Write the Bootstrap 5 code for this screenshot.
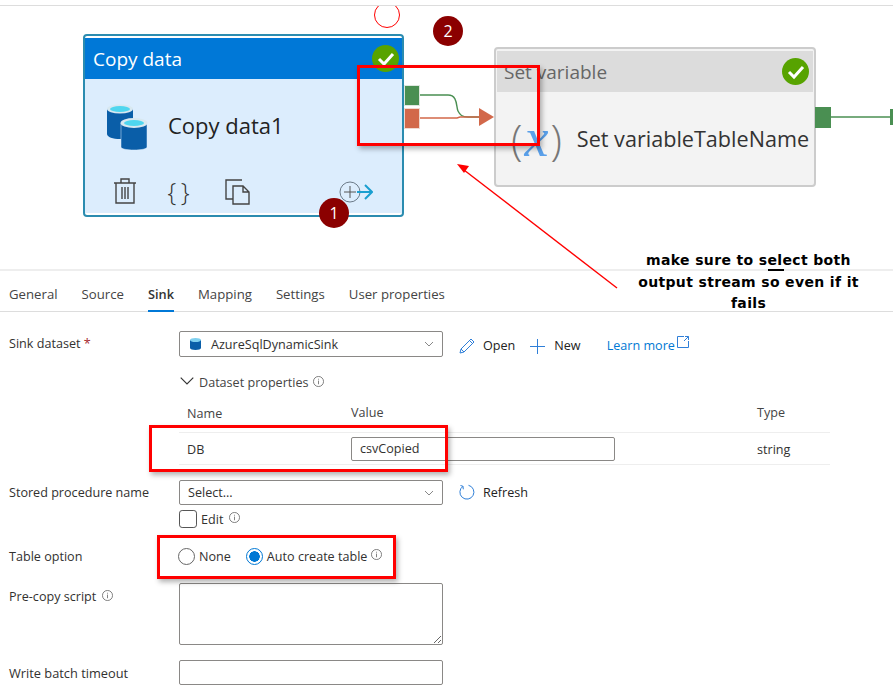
<!DOCTYPE html>
<html lang="en">
<head>
<meta charset="utf-8">
<title>Copy data sink</title>
<link href="https://cdn.jsdelivr.net/npm/bootstrap@5.3.0/dist/css/bootstrap.min.css" rel="stylesheet">
<style>
html,body{height:698px;overflow:hidden;background:#fff}
body{position:relative;font-family:"Open Sans","Noto Sans",sans-serif;font-size:12.6px;color:#323130}
.canvas-area{position:relative;height:271px;border-bottom:2px solid #eee}
.canvas-top{height:6px;background:#fff;border-bottom:1px solid #ddd;position:relative;z-index:3}
.pnode{position:absolute;border-radius:4px}
.node-copy{left:83px;top:34px;width:321px;height:183px;border:2px solid #2b8cb0;background:#fff;padding:2px 0 3px}
.node-set{left:494px;top:47px;width:322px;height:140px;border:2px solid #ccc;background:#f3f3f3;padding:2px 0 0 1px}
.node-head{height:41px;font-size:19px;padding-left:7px;display:flex;align-items:center}
.node-copy .node-head{background:#0078d7;color:#fff;height:41px;padding-left:8px;padding-top:1px}
.node-copy .node-inner{background:#dcedfd;height:134px;position:relative}
.node-set .node-head{background:#dcdcdc;color:#666;margin-right:1px;padding-top:1px}
.node-title{font-size:22px;color:#222;line-height:1;white-space:nowrap}
.node-body{display:flex;align-items:center}
.node-actions{display:flex;align-items:center;color:#444}
.ok-badge{position:absolute;width:27px;height:27px}
.port{position:absolute;width:16px;height:21px;border:1px solid #dfe8df}
.port-green{background:#4a8f52}
.port-red{background:#d2684a;border-color:#f0d8d0}
.wires{position:absolute;left:0;top:0;width:893px;height:271px;pointer-events:none}
.var-paren{font-family:"Open Sans",sans-serif;font-size:42px;color:#777;font-weight:300;line-height:1}
.var-x{font-family:"Liberation Serif",serif;font-style:italic;font-size:54px;color:#5aa0ea;line-height:.8;margin:0 2px}
.prop-tabs{display:flex;gap:24px;padding:0 9px;height:41px;border-bottom:1px solid #ddd;font-size:13.2px;color:#444;align-items:stretch}
.prop-tab{display:flex;align-items:center;padding-top:8px;white-space:nowrap}
.prop-tab-on{font-weight:600;font-size:12.8px;color:#333;border-bottom:2px solid #0078d7;margin-bottom:-1px}
.form-area{padding:0 9px;position:relative}
.frow{display:flex;align-items:flex-start}
.flabel{width:170px;flex:none;white-space:nowrap}
.az-control,.az-control:focus{width:264px;flex:none;border:1px solid #8a8886;border-radius:2px;font-size:12.6px;color:#323130;padding:0 8px;box-shadow:none;height:25px;min-height:0;line-height:23px;background-color:#fff}
.az-select,.az-select:focus{background-image:url("data:image/svg+xml,%3Csvg xmlns='http://www.w3.org/2000/svg' viewBox='0 0 10 6'%3E%3Cpath d='M1 1l4 4 4-4' fill='none' stroke='%23888' stroke-width='1'/%3E%3C/svg%3E");background-size:10px 6px;background-position:right 8px center;background-repeat:no-repeat;display:flex;align-items:center;gap:6px}
.req-mark{color:#a4262c}
.ds-table{width:651px;border-collapse:collapse}
.ds-head{height:24px;margin-bottom:8px;padding-top:2px;font-weight:500;display:flex;align-items:center;color:#444}
.ds-row{height:33px;display:flex;align-items:center;border-top:1px solid #eee;border-bottom:1px solid #eee}
.cell-a{width:172px;padding-left:8px;padding-top:3px;flex:none}
.cell-b{width:406px;flex:none}
.cell-c{padding-top:3px}
.az-link{color:#0078d4;text-decoration:none}
.tool-btn{display:inline-flex;align-items:center;gap:8px;color:#222}
.info{width:11px;height:11px;flex:none}
.az-check{width:18px;height:18px;margin:0!important;border:1px solid #555;border-radius:2px}
.az-radio{width:17px;height:17px;margin:0!important;border:1px solid #666;background:#fff}
.az-radio:checked{background-color:#fff;border:1px solid #0078d4;background-image:radial-gradient(circle,#0078d4 0,#0078d4 5px,#fff 5.5px);}
.az-radio:focus{box-shadow:none}
.az-area,.az-area:focus{height:62px;display:block;resize:vertical;line-height:1.2}
.redbox{position:absolute;border:3px solid #f00;box-shadow:2px 3px 5px rgba(0,0,0,.3);pointer-events:none;z-index:5}
.num-pin{position:absolute;width:30px;height:30px;border-radius:50%;background:#8b0000;color:#fff;font-size:16px;display:flex;align-items:center;justify-content:center;z-index:6}
.ring{position:absolute;left:374px;top:2px;width:26px;height:26px;border:1.5px solid #f00;border-radius:50%;z-index:2}
.note-text{position:absolute;left:636px;top:250px;width:225px;text-align:center;font-family:"DejaVu Sans",sans-serif;font-weight:700;font-size:14px;letter-spacing:.35px;line-height:21.5px;color:#000;z-index:6}
.note-mark{position:absolute;left:768px;top:269px;width:16px;height:2px;background:#000;z-index:6}
.arrow-layer{position:absolute;left:0;top:0;width:893px;height:698px;pointer-events:none;z-index:5}
</style>
</head>
<body>
<div class="canvas-area">
  <div class="canvas-top"></div>
  <div class="ring"></div>

  <div class="pnode node-copy">
    <div class="node-head">Copy data</div>
    <div class="node-inner">
      <div class="node-body" style="height:94px">
        <svg width="42" height="46" viewBox="0 0 42 46" style="margin-left:22px;margin-top:1px">
          <path d="M0 5v25c0 3 6 5 13 5s13-2 13-5V5z" fill="#0a5ea8"/>
          <ellipse cx="13" cy="5" rx="13" ry="4.5" fill="#d8e8f0"/><ellipse cx="13" cy="5" rx="10" ry="3" fill="#4fd6ef"/>
          <path d="M14 19v24c0 2 6 3 13 3s13-1 13-3V19z" fill="#0a5ea8" stroke="#dcedfd" stroke-width=".5"/>
          <ellipse cx="27" cy="19" rx="13.5" ry="5" fill="#d8e8f0"/><ellipse cx="27" cy="19" rx="10" ry="3" fill="#4fd6ef"/>
        </svg>
        <span class="node-title" style="margin:-2px 0 0 19px">Copy data1</span>
      </div>
      <div class="node-actions" style="height:36px;padding-left:28px;position:relative">
        <svg width="24" height="28" viewBox="0 0 24 28" fill="none" stroke="#444" stroke-width="1.4"><path d="M1 6h22M8 6V2h8v4M3 6v20h18V6M9 10v12M12 10v12M15 10v12"/></svg>
        <span style="font-size:25px;margin-left:27px;line-height:1;width:28px;text-align:center;font-weight:300;white-space:nowrap;letter-spacing:-1px;color:#333">{ }</span>
        <svg width="25" height="27" viewBox="0 0 25 27" fill="none" stroke="#444" stroke-width="1.4" style="margin-left:33px"><path d="M17 2H1v19h7M8 8h10l6 6v12H8zM18 8v6h6"/></svg>
        <svg width="34" height="22" viewBox="0 0 34 22" fill="none" style="position:absolute;left:254px;top:8px"><circle cx="11" cy="11" r="10" stroke="#6b7a88" stroke-width="1"/><path d="M5 11h12M11 5v12" stroke="#555" stroke-width="1"/><path d="M18 11h14M26 4l7 7-7 7" stroke="#1a9fd0" stroke-width="2"/></svg>
      </div>
    </div>
  </div>
  <svg class="ok-badge" style="left:372px;top:45px;z-index:1" viewBox="0 0 27 27"><circle cx="13.5" cy="13.5" r="13.5" fill="#57a300"/><path d="M7 14l5 5 9-10" fill="none" stroke="#fff" stroke-width="3"/></svg>

  <div class="port port-green" style="left:404px;top:85px"></div>
  <div class="port port-red" style="left:404px;top:108px"></div>

  <div class="pnode node-set">
    <div class="node-head">Set variable</div>
    <div class="node-body" style="height:93px">
      <span class="var-paren" style="margin-left:14px">(</span><span class="var-x">x</span><span class="var-paren">)</span>
      <span class="node-title" style="margin-left:15px;color:#333;font-size:21.6px">Set variableTableName</span>
    </div>
  </div>
  <svg class="ok-badge" style="left:782px;top:58px" viewBox="0 0 27 27"><circle cx="13.5" cy="13.5" r="13.5" fill="#57a300"/><path d="M7 14l5 5 9-10" fill="none" stroke="#fff" stroke-width="3"/></svg>
  <div class="port port-green" style="left:815px;top:107px;border:0"></div>

  <svg class="wires" viewBox="0 0 893 271" fill="none">
    <path d="M420 95h28c10 0 8 12 10 16s4 6 10 6h12" stroke="#4a8f52" stroke-width="1.4"/>
    <path d="M420 118h37l3-1h20" stroke="#d2684a" stroke-width="1.4"/>
    <path d="M479 108l15 9-15 9z" fill="#d2684a"/>
    <path d="M831 117h59" stroke="#4a8f52" stroke-width="1.4"/>
    <path d="M890 109h3v16h-3z" fill="#4a8f52"/>
  </svg>
</div>

<nav class="prop-tabs">
  <span class="prop-tab">General</span>
  <span class="prop-tab">Source</span>
  <span class="prop-tab prop-tab-on">Sink</span>
  <span class="prop-tab">Mapping</span>
  <span class="prop-tab">Settings</span>
  <span class="prop-tab">User properties</span>
</nav>

<form class="form-area">
  <div class="frow" style="margin-top:19px">
    <label class="flabel" style="margin-top:4px">Sink dataset <span class="req-mark">*</span></label>
    <div class="form-control az-control az-select" style="height:26px">
      <svg width="11" height="12" viewBox="0 0 11 12" style="margin-left:2px"><path d="M0 2v8c0 1 2.500 2 5.500 2s5.500-1 5.500-2V2z" fill="#0a5ea8"/><ellipse cx="5.500" cy="2" rx="5.500" ry="2" fill="#7fd0ef"/></svg>
      <span class="ms-1">AzureSqlDynamicSink</span>
    </div>
    <span class="tool-btn" style="margin-left:16px;margin-top:6px">
      <svg width="16" height="16" viewBox="0 0 16 16" fill="none" stroke="#2f7fd8" stroke-width="1"><path d="M1 15l1-4L12 1l3 3L5 14zM2 11l3 3M10.500 2.500l3 3"/></svg>Open
    </span>
    <span class="tool-btn" style="margin-left:15px;margin-top:6px;gap:9px">
      <svg width="15" height="15" viewBox="0 0 15 15" fill="none" stroke="#2f7fd8" stroke-width="1"><path d="M0 7.500h15M7.500 0v15"/></svg>New
    </span>
    <a class="az-link d-inline-flex align-items-start" href="#" style="margin-left:26px;margin-top:6px;gap:2px">Learn more
      <svg width="12" height="12" viewBox="0 0 12 12" fill="none" stroke="#2f7fd8" stroke-width="1" style="margin-top:-1px"><path d="M7 .5H.5v11h11V5M7 5 11.500.5M8 .5h3.500V4"/></svg>
    </a>
  </div>

  <div class="d-flex align-items-center" style="margin:17px 0 0 170px;height:18px">
    <svg width="14" height="8" viewBox="0 0 12 7" fill="none" stroke="#333" stroke-width="1" style="margin:-4px 5px 0 1px"><path d="M.5.500l5.500 5.500L11.500.5"/></svg>
    <span style="font-weight:500;color:#444">Dataset properties</span>
    <svg class="info ms-1" viewBox="0 0 12 12" fill="none" stroke="#555" stroke-width=".8" style="margin-top:-4px"><circle cx="6" cy="6" r="5.500"/><path d="M6 5v4M6 3v1"/></svg>
  </div>

  <div class="ds-table" style="margin:8px 0 0 170px">
    <div class="ds-head"><span class="cell-a">Name</span><span class="cell-b">Value</span><span>Type</span></div>
    <div class="ds-row">
      <span class="cell-a">DB</span>
      <span class="cell-b"><input class="form-control az-control" value="csvCopied" aria-label="DB value" style="height:24px"></span>
      <span class="cell-c">string</span>
    </div>
  </div>

  <div class="frow" style="margin-top:15px">
    <label class="flabel" style="margin-top:4px">Stored procedure name</label>
    <select class="form-select az-control az-select" aria-label="Stored procedure name"><option>Select...</option></select>
    <span class="tool-btn" style="margin-left:16px;margin-top:4px;gap:8px">
      <svg width="16" height="16" viewBox="0 0 16 16" fill="none" stroke="#2f7fd8" stroke-width="1" style="margin-top:-3px"><path d="M9.500 1.300A7 7 0 1 1 4 2.300M1.500 1.500 4 2.300l.3 3"/></svg>Refresh
    </span>
  </div>
  <div class="d-flex align-items-center" style="margin:5px 0 0 170px;height:18px">
    <input class="form-check-input az-check" type="checkbox" aria-label="Edit">
    <span style="margin-left:4px;padding-top:3px">Edit</span>
    <svg class="info" viewBox="0 0 12 12" fill="none" stroke="#555" stroke-width=".8" style="margin:-3px 0 0 6px"><circle cx="6" cy="6" r="5.500"/><path d="M6 5v4M6 3v1"/></svg>
  </div>

  <div class="frow align-items-center" style="margin-top:18px;height:20px">
    <label class="flabel" style="padding-top:2px">Table option</label>
    <input class="form-check-input az-radio" type="radio" name="topt" aria-label="None" style="margin-left:-1px!important">
    <span style="margin-left:4px;padding-top:2px">None</span>
    <input class="form-check-input az-radio" type="radio" name="topt" checked aria-label="Auto create table" style="margin-left:15px!important">
    <span style="margin-left:4px;padding-top:2px">Auto create table</span>
    <svg class="info" viewBox="0 0 12 12" fill="none" stroke="#555" stroke-width=".8" style="margin:-3px 0 0 4px"><circle cx="6" cy="6" r="5.500"/><path d="M6 5v4M6 3v1"/></svg>
  </div>

  <div class="frow" style="margin-top:17px">
    <label class="flabel d-flex align-items-start" style="margin-top:5px"><span>Pre-copy script</span>
      <svg class="info" viewBox="0 0 12 12" fill="none" stroke="#555" stroke-width=".8" style="margin:2px 0 0 6px"><circle cx="6" cy="6" r="5.500"/><path d="M6 5v4M6 3v1"/></svg>
    </label>
    <textarea class="form-control az-control az-area" aria-label="Pre-copy script"></textarea>
  </div>

  <div class="frow align-items-center" style="margin-top:15px">
    <label class="flabel" style="padding-top:2px;font-size:12.8px">Write batch timeout</label>
    <input class="form-control az-control" aria-label="Write batch timeout">
  </div>
</form>

<div class="redbox" style="left:357px;top:65px;width:183px;height:81px"></div>
<div class="redbox" style="left:149px;top:425px;width:299px;height:47px"></div>
<div class="redbox" style="left:157px;top:535px;width:239px;height:44px"></div>
<div class="num-pin" style="left:319px;top:198px">1</div>
<div class="num-pin" style="left:433px;top:16px">2</div>
<svg class="arrow-layer" viewBox="0 0 893 698"><path d="M617 288 464 170" stroke="#f00" stroke-width="1.4" fill="none"/><path d="M457 164l12 2-5 7z" fill="#f00"/></svg>
<div class="note-text">make sure to select both output stream so even if it fails</div>
<div class="note-mark"></div>
</body>
</html>
